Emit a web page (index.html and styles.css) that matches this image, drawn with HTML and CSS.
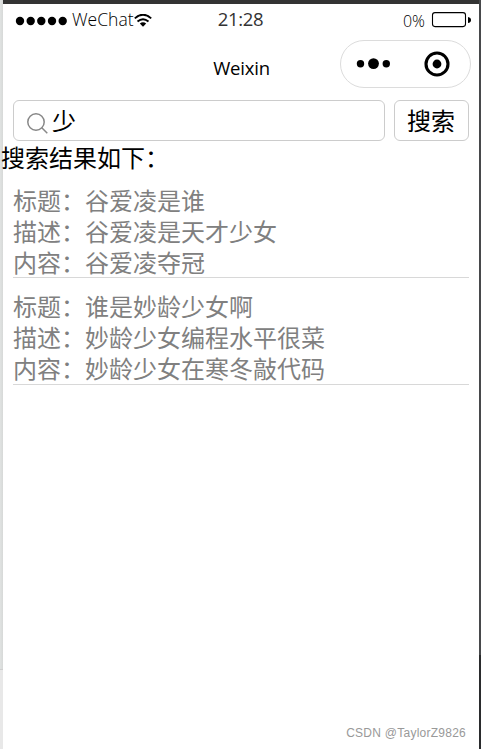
FILE: index.html
```html
<!DOCTYPE html>
<html lang="zh-CN">
<head>
<meta charset="utf-8">
<title>Weixin</title>
<link rel="stylesheet" href="styles.css">
</head>
<body>
<div class="edge-left"><div class="edge-left-top"></div></div>
<main class="phone">
  <header class="status">
    <div class="carrier">
      <svg class="signal" width="52" height="10" viewBox="0 0 52 10"><circle cx="5" cy="5" r="4.2"/><circle cx="15.7" cy="5" r="4.2"/><circle cx="26.3" cy="5" r="4.2"/><circle cx="37" cy="5" r="4.2"/><circle cx="47.7" cy="5" r="4.2"/></svg>
      <span class="name">WeChat</span>
      <svg class="wifi" width="18" height="13" viewBox="0 0 18 13"><path d="M.8 4.4Q9-3 17.2 4.4M3.5 7.5Q9 2.8 14.5 7.5" fill="none" stroke="#000" stroke-width="1.9"/><path d="M5.8 9.5Q9 7.2 12.2 9.5L9 12.8z"/></svg>
    </div>
    <time class="clock">21:28</time>
    <div class="power">
      <span class="percent">0%</span>
      <svg class="battery" width="40" height="16" viewBox="0 0 40 16"><rect x="1.5" y=".6" width="33" height="14" rx="2.5" fill="#fff" stroke="#000" stroke-width="1.1"/><path d="M37 5q3 .5 3 3t-3 3z"/></svg>
    </div>
  </header>
  <nav class="nav">
    <h1 class="title">Weixin</h1>
    <div class="capsule">
      <svg width="131" height="48" viewBox="0 0 131 48"><circle cx="20.5" cy="23.8" r="3.7"/><circle cx="33.5" cy="23.6" r="5.4"/><circle cx="46.3" cy="23.8" r="3.7"/><circle cx="97" cy="24" r="11" fill="none" stroke="#000" stroke-width="3.1"/><circle cx="97" cy="24" r="4.4"/></svg>
    </div>
  </nav>
  <section class="search">
    <div class="field">
      <svg class="glass" width="22" height="22" viewBox="0 0 22 22" fill="none" stroke="#888" stroke-width="1.5"><circle cx="9" cy="9" r="8.2"/><path d="M14.8 14.8L20.3 20.2"/></svg>
      <span>少</span>
    </div>
    <button class="submit">搜索</button>
  </section>
  <p class="caption">搜索结果如下：</p>
  <section class="results">
    <article class="result">
      <p>标题：谷爱凌是谁</p>
      <p>描述：谷爱凌是天才少女</p>
      <p>内容：谷爱凌夺冠</p>
    </article>
    <article class="result">
      <p>标题：谁是妙龄少女啊</p>
      <p>描述：妙龄少女编程水平很菜</p>
      <p>内容：妙龄少女在寒冬敲代码</p>
    </article>
  </section>
  <footer class="watermark">CSDN @TaylorZ9826</footer>
</main>
<div class="edge-right"><div class="edge-right-top"></div></div>
</body>
</html>
```
FILE: styles.css
```css
* { box-sizing: border-box; }
body {
  margin: 0;
  height: 749px;
  display: grid;
  grid-template-columns: 3px 476px 2px;
  overflow: hidden;
  background: #fff;
  color: #000;
  font-family: "Open Sans", "Noto Sans CJK SC", sans-serif;
}
svg { display: block; flex: none; }
p, h1 { margin: 0; font-weight: 400; }
.edge-left { background: #e8e8e8; }
.edge-left-top { height: 670px; background: linear-gradient(90deg, #e0e3e2, #d7d9d8); border-bottom: 1px solid #cfcfcf; }
.edge-right { background: #2a2b2d; }
.edge-right-top { height: 655px; background: #47494b; }
.phone {
  display: flex;
  flex-direction: column;
  height: 749px;
  border-top: 4px solid #333;
}
.status {
  display: grid;
  grid-template-columns: 1fr auto 1fr;
  height: 32px;
  padding: 0 8px 0 12px;
  line-height: 30px;
  font-weight: 300;
}
.carrier, .power { display: flex; align-items: center; height: 32px; }
.signal { margin-top: 2px; }
.name { margin: -3px 0 0 5px; font-size: 17.5px; letter-spacing: 0; }
.wifi { margin-top: 1px; }
.clock { margin-left: -5px; font-size: 18.5px; letter-spacing: -.3px; font-weight: 400; color: #333; }
.power { justify-content: flex-end; }
.percent { margin: 2px 6px 0 0; font-size: 16px; letter-spacing: 0; }
.battery { margin-top: 0; }
.nav {
  display: grid;
  grid-template-columns: 1fr auto 1fr;
  height: 64px;
  padding: 4px 8px 0 12px;
}
.title { grid-column: 2; margin-left: -3px; font-size: 18.5px; line-height: 56px; letter-spacing: -.2px; }
.capsule {
  justify-self: end;
  width: 131px;
  height: 48px;
  border: 1px solid #dcdcdc;
  border-radius: 24px;
}
.capsule svg { margin: -1px; }
.search { display: flex; gap: 9px; height: 41px; padding: 0 10px; font-size: 24px; }
.field, .submit {
  display: flex;
  align-items: center;
  border: 1px solid #ccc;
  border-radius: 6px;
  background: #fff;
}
.field { width: 372px; padding-left: 13px; line-height: 36px; }
.glass { margin: 6px 3px 0 0; }
.submit {
  width: 75px;
  justify-content: center;
  padding: 0 1px 2px 0;
  font: inherit;
  color: #000;
}
.caption { height: 33px; font-size: 24px; line-height: 34px; margin-left: -2px; }
.results { padding: 0 10px; color: #808080; font-size: 24px; line-height: 31px; }
.result { height: 104px; padding-top: 11px; border-bottom: 1px solid #d8d8d8; }
.result + .result { height: 107px; padding-top: 13px; }
.result p { height: 31px; }
.watermark {
  margin: auto 13px 8px auto;
  color: #999;
  font: 12px/16px "Liberation Sans", sans-serif;
  letter-spacing: .25px;
}
```
